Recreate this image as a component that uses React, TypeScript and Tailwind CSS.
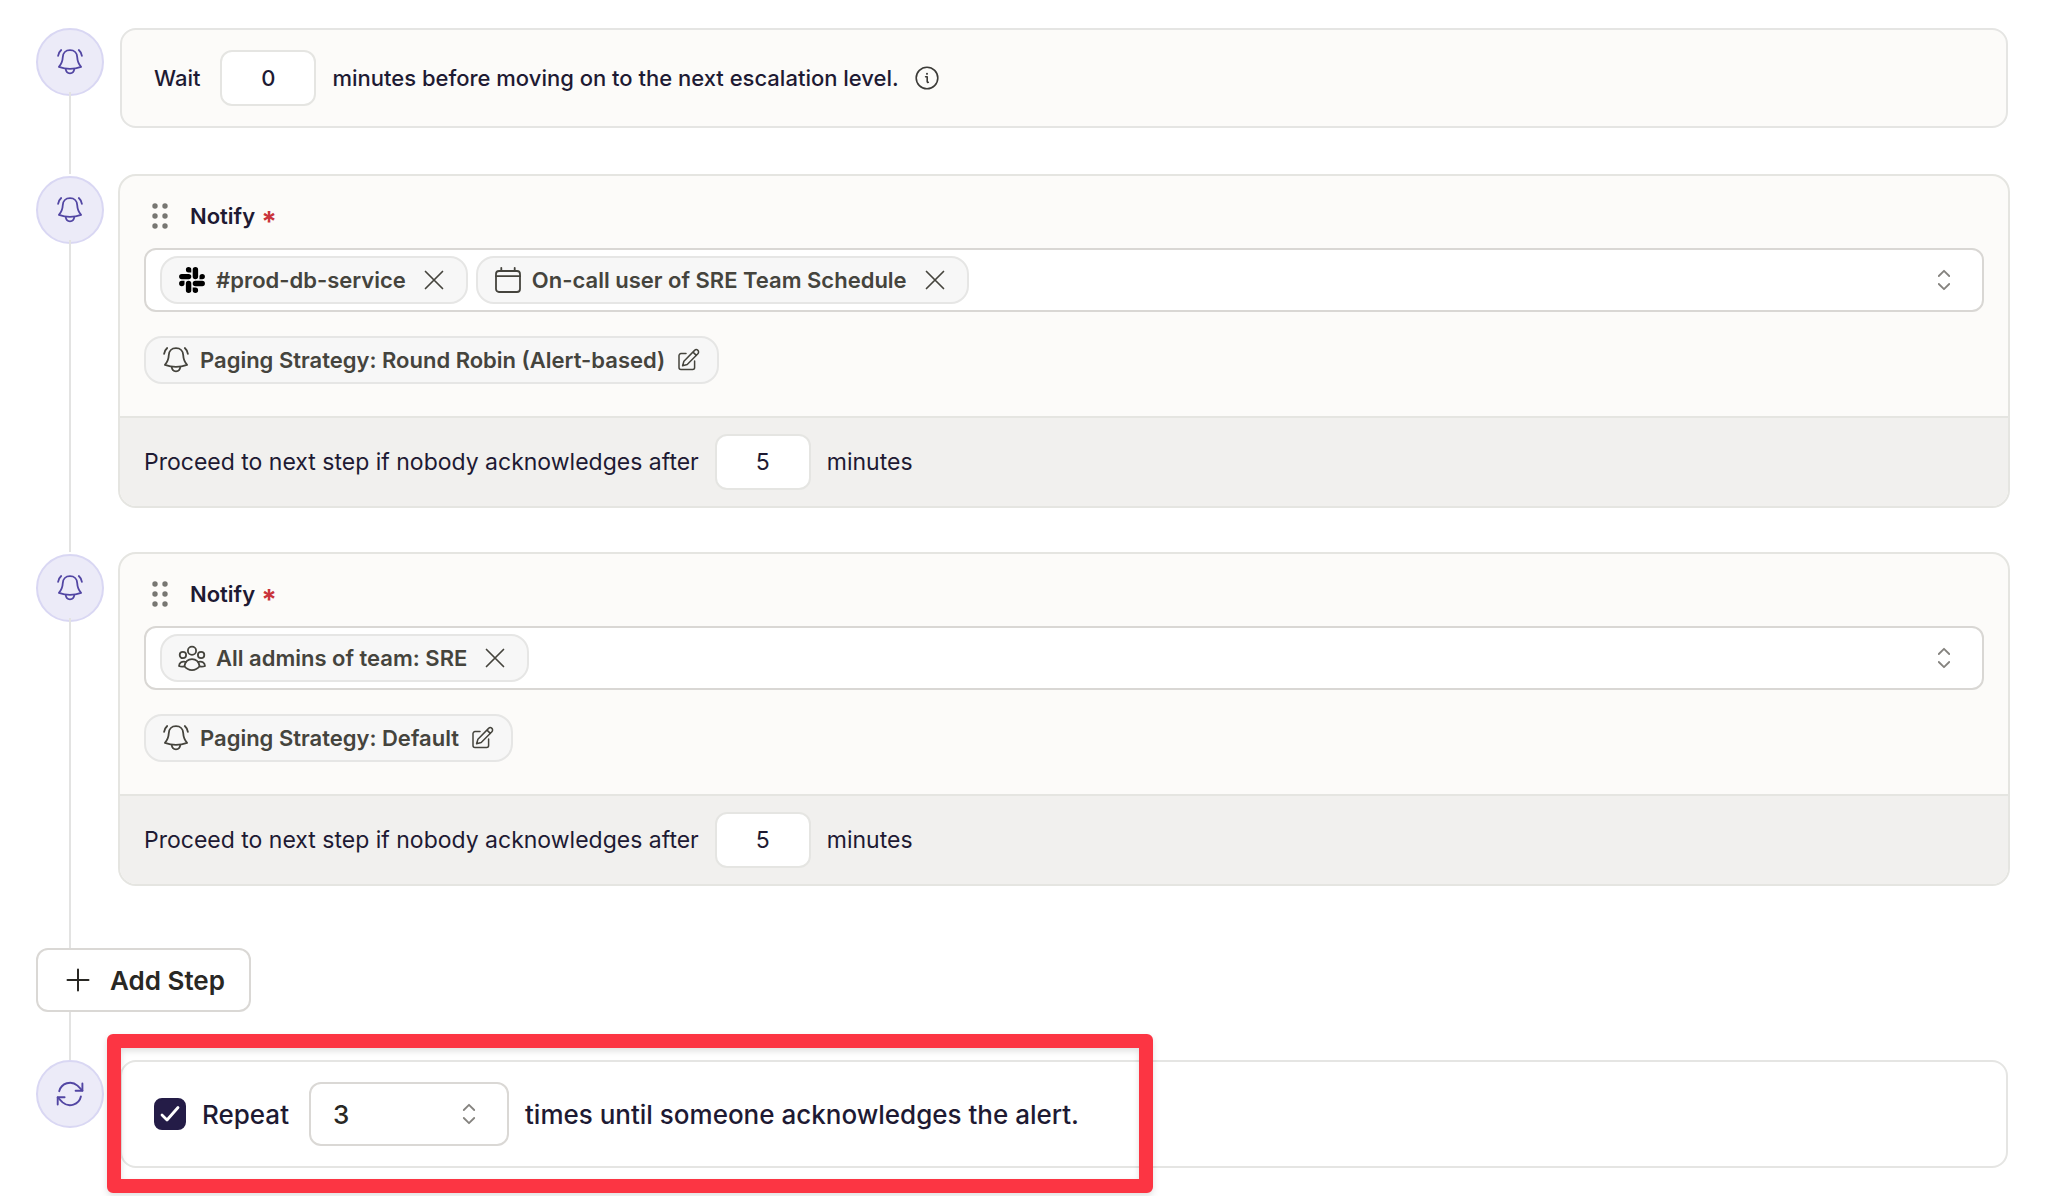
import { ReactNode, useState } from "react";

function Svg({ children, className, viewBox = "0 0 28 28", stroke = 1.8 }: { children: ReactNode; className: string; viewBox?: string; stroke?: number }) {
  return (
    <svg aria-hidden="true" viewBox={viewBox} className={className} fill="none" stroke="currentColor" strokeWidth={stroke} strokeLinecap="round" strokeLinejoin="round">
      {children}
    </svg>
  );
}

const BellIcon = () => (
  <Svg className="size-7 shrink-0">
    <path d="M14 2.2C9.6 2.2 7 5.2 6.8 9C6.6 13 5.8 15.6 2.9 18.9C9.5 21.3 18.5 21.3 25.1 18.9C22.2 15.6 21.4 13 21.2 9C21 5.2 18.4 2.2 14 2.2Z" />
    <path d="M9.7 20.8C9.9 23.6 11.7 25.3 14 25.3S18.1 23.6 18.3 20.8" />
    <path d="M5.2 2C3.4 3.6 2.4 5.4 2.1 7.9M22.8 2C24.6 3.6 25.6 5.4 25.9 7.9" />
  </Svg>
);

const RefreshIcon = () => (
  <Svg className="size-7 shrink-0" stroke={1.9}>
    <path d="M3.2 11.2A11.2 11.2 0 0 1 21.5 5.6L26.4 10.6" />
    <path d="M26.4 3.4V10.7H19.6" />
    <path d="M24.9 16.5A11.2 11.2 0 0 1 6.6 22.4L1.7 17.4" />
    <path d="M1.7 24.6V17.3H8.6" />
  </Svg>
);

const SlackIcon = () => (
  <svg aria-hidden="true" viewBox="-1 -1 26 26" className="size-7 shrink-0 text-black" fill="currentColor">
    <path d="M5.042 15.165a2.528 2.528 0 0 1-2.52 2.523A2.528 2.528 0 0 1 0 15.165a2.527 2.527 0 0 1 2.522-2.52h2.52v2.52zM6.313 15.165a2.527 2.527 0 0 1 2.521-2.52 2.527 2.527 0 0 1 2.521 2.52v6.313A2.528 2.528 0 0 1 8.834 24a2.528 2.528 0 0 1-2.521-2.522v-6.313zM8.834 5.042a2.528 2.528 0 0 1-2.521-2.52A2.528 2.528 0 0 1 8.834 0a2.528 2.528 0 0 1 2.521 2.522v2.52H8.834zM8.834 6.313a2.528 2.528 0 0 1 2.521 2.521 2.528 2.528 0 0 1-2.521 2.521H2.522A2.528 2.528 0 0 1 0 8.834a2.528 2.528 0 0 1 2.522-2.521h6.312zM18.956 8.834a2.528 2.528 0 0 1 2.522-2.521A2.528 2.528 0 0 1 24 8.834a2.528 2.528 0 0 1-2.522 2.521h-2.522V8.834zM17.688 8.834a2.528 2.528 0 0 1-2.523 2.521 2.527 2.527 0 0 1-2.52-2.521V2.522A2.527 2.527 0 0 1 15.165 0a2.528 2.528 0 0 1 2.523 2.522v6.312zM15.165 18.956a2.528 2.528 0 0 1 2.523 2.522A2.528 2.528 0 0 1 15.165 24a2.527 2.527 0 0 1-2.52-2.522v-2.522h2.52zM15.165 17.688a2.527 2.527 0 0 1-2.52-2.523 2.526 2.526 0 0 1 2.52-2.52h6.313A2.527 2.527 0 0 1 24 15.165a2.528 2.528 0 0 1-2.522 2.523h-6.313z" />
  </svg>
);

const CalendarIcon = () => (
  <Svg className="size-7 shrink-0">
    <rect x="2" y="5" width="24" height="21" rx="3" />
    <path d="M2 10.2H26M7.3 1.8V5M20.7 1.8V5" />
  </Svg>
);

const TeamIcon = () => (
  <Svg className="size-7 shrink-0">
    <circle cx="14" cy="6.8" r="4.1" />
    <circle cx="4.9" cy="11" r="3.2" />
    <circle cx="23.1" cy="11" r="3.2" />
    <path d="M6.4 22.3C7.3 17.7 10.2 15.2 14 15.2S20.7 17.7 21.6 22.3C19.5 25 17 26.1 14 26.1S8.5 25 6.4 22.3Z" />
    <path d="M7.6 17.8C4 16.9 1.3 18.3 1 22C2.7 22.8 4.6 22.9 6.4 22.3M20.4 17.8C24 16.9 26.7 18.3 27 22C25.3 22.8 23.4 22.9 21.6 22.3" />
  </Svg>
);

const EditIcon = () => (
  <Svg className="size-6 shrink-0" viewBox="0 0 24 24" stroke={1.5}>
    <path d="M9 5.6H4A2 2 0 0 0 2 7.6V19.4A2 2 0 0 0 4 21.4H15.6A2 2 0 0 0 17.6 19.4V13" />
    <path d="M5.6 17.8L6.9 13.2L17.6 2.4A1.6 1.6 0 0 1 20.9 5.7L10.2 16.5ZM16 4.1L19.3 7.4" />
  </Svg>
);

const CloseIcon = () => (
  <Svg className="size-6" viewBox="0 0 24 24" stroke={1.7}>
    <path d="M3.5 3.5L20.5 20.5M20.5 3.5L3.5 20.5" />
  </Svg>
);

const SortIcon = () => (
  <Svg className="h-6 w-4 text-[#85837f]" viewBox="0 0 16 24">
    <path d="M2.8 8L8 2.8L13.2 8M2.8 16L8 21.2L13.2 16" />
  </Svg>
);

const InfoIcon = () => (
  <Svg className="size-6" viewBox="0 0 24 24" stroke={1.6}>
    <circle cx="12" cy="12" r="10.8" />
    <path d="M10.6 10.8H12.2V15.6Q12.2 16.6 13.3 16.3" />
    <path d="M12 7.6V7.9" strokeWidth={1.9} />
  </Svg>
);

const GripIcon = () => (
  <svg aria-hidden="true" viewBox="0 0 16 28" className="h-7 w-4" fill="currentColor">
    {[4, 14, 24].map((y) => (
      <g key={y}>
        <circle cx="3" cy={y} r="2.7" />
        <circle cx="13" cy={y} r="2.7" />
      </g>
    ))}
  </svg>
);

function Marker({ children }: { children: ReactNode }) {
  return <div className="flex size-[68px] shrink-0 items-center justify-center rounded-full border-2 border-[#d9d7f3] bg-[#ecebf8] text-[#5246a3]">{children}</div>;
}

function Rail({ className = "" }: { className?: string }) {
  return (
    <div className={`flex flex-col items-center ${className}`}>
      <Marker>
        <BellIcon />
      </Marker>
      <div className="z-10 -mt-1 w-0.5 flex-1 bg-[#e3e3e2]" />
    </div>
  );
}

function MinutesInput({ id, value, className }: { id: string; value: string; className: string }) {
  return <input id={id} type="text" inputMode="numeric" defaultValue={value} className={`h-14 w-24 rounded-xl border-2 border-[#e5e5e2] bg-white text-center outline-none ${className}`} />;
}

function Chip({ icon, label }: { icon: ReactNode; label: string }) {
  return (
    <li className="flex h-12 items-center rounded-[18px] border-2 border-[#e6e6e5] bg-[#f7f7f7] px-4 text-[22px] font-semibold text-[#45443d]">
      {icon}
      <span className="ml-2.5">{label}</span>
      <button type="button" aria-label={`Remove ${label}`} className="mr-1 ml-4">
        <CloseIcon />
      </button>
    </li>
  );
}

type StepProps = { id: string; chips: { icon: ReactNode; label: string }[]; strategy: string; last?: boolean };

function NotifyStep({ id, chips, strategy, last }: StepProps) {
  return (
    <li className="flex gap-3.5">
      <Rail className="pt-0.5" />
      <div className={`min-w-0 flex-1 ${last ? "pb-[62px]" : "pb-11"}`}>
        <section className="overflow-hidden rounded-[18px] border-2 border-[#e5e5e1] bg-[#fcfbf9]">
          <div className="px-6 pt-6 pb-8">
            <div className="flex h-8 items-center pl-2">
              <button type="button" aria-label="Reorder step" className="text-[#777672]">
                <GripIcon />
              </button>
              <label htmlFor={`${id}-targets`} className="ml-[22px] flex text-[22px] font-semibold leading-8 text-[#1e1a33]">
                Notify
                <span className="ml-1.5 h-8 text-[28px] font-bold leading-[44px] text-[#c9343b]">*</span>
              </label>
            </div>
            <div className="mt-4 flex min-h-16 items-center rounded-xl border-2 border-[#d9d7d4] bg-white pr-[30px] pl-3.5">
              <ul className="flex flex-wrap gap-2">
                {chips.map((chip) => (
                  <Chip key={chip.label} {...chip} />
                ))}
              </ul>
              <input id={`${id}-targets`} type="text" className="h-12 min-w-0 flex-1 bg-transparent px-2 text-[22px] outline-none" />
              <button type="button" aria-label="Show options">
                <SortIcon />
              </button>
            </div>
            <button type="button" className="mt-6 flex h-12 items-center rounded-[18px] border-2 border-[#e6e6e5] bg-[#f7f7f7] px-4 text-[22px] font-semibold text-[#45443d]">
              <BellIcon />
              <span className="mr-3 ml-2.5">Paging Strategy: {strategy}</span>
              <EditIcon />
            </button>
          </div>
          <div className="flex items-center gap-4 border-t-2 border-[#e5e5e1] bg-[#f1f0ee] px-6 py-4 text-[23px] text-[#1e1a33]">
            <label htmlFor={`${id}-minutes`}>Proceed to next step if nobody acknowledges after</label>
            <MinutesInput id={`${id}-minutes`} value="5" className="" />
            <span>minutes</span>
          </div>
        </section>
      </div>
    </li>
  );
}

export default function App() {
  const [repeat, setRepeat] = useState(true);
  return (
    <main className="bg-white px-9 py-7 font-['Inter',sans-serif] text-[#1e1a33]">
      <ol>
        <li className="flex gap-4 pr-0.5">
          <Rail />
          <div className="min-w-0 flex-1 pb-[46px]">
            <section className="flex items-center rounded-2xl border-2 border-[#e5e5e3] bg-[#fcfbf9] px-8 py-5 text-[22px] font-medium">
              <label htmlFor="wait-minutes" className="mr-5">
                Wait
              </label>
              <MinutesInput id="wait-minutes" value="0" className="mr-4" />
              <span>minutes before moving on to the next escalation level.</span>
              <button type="button" aria-label="More information" className="ml-4 text-[#3c3b38]">
                <InfoIcon />
              </button>
            </section>
          </div>
        </li>
        <NotifyStep
          id="step-1"
          strategy="Round Robin (Alert-based)"
          chips={[
            { icon: <SlackIcon />, label: "#prod-db-service" },
            { icon: <CalendarIcon />, label: "On-call user of SRE Team Schedule" },
          ]}
        />
        <NotifyStep id="step-2" strategy="Default" chips={[{ icon: <TeamIcon />, label: "All admins of team: SRE" }]} last />
      </ol>

      <button type="button" className="flex h-16 items-center rounded-xl border-2 border-[#dad8d5] bg-white pr-6 pl-[26px] text-[26px] font-semibold text-[#292824]">
        <Svg className="mr-[18px] size-7" stroke={2}>
          <path d="M14 3.5V24.5M3.5 14H24.5" />
        </Svg>
        Add Step
      </button>
      <div className="ml-[33px] h-12 w-0.5 bg-[#e3e3e2]" />

      <div className="flex gap-4 pr-0.5">
        <Marker>
          <RefreshIcon />
        </Marker>
        <section className="relative flex min-w-0 flex-1 items-center gap-4 rounded-2xl border-2 border-[#e5e5e3] px-8 py-5 text-[26px] font-medium">
          <label className="flex items-center gap-4 pr-1">
            <span className="grid size-8 place-items-center">
              <input type="checkbox" checked={repeat} onChange={(e) => setRepeat(e.target.checked)} className="col-start-1 row-start-1 size-8 appearance-none rounded-lg border-2 border-[#241c47] checked:bg-[#241c47]" />
              {repeat && (
                <Svg className="pointer-events-none col-start-1 row-start-1 size-6 text-white" viewBox="0 0 24 24" stroke={2.8}>
                  <path d="M4 13L9 18L20 5.5" />
                </Svg>
              )}
            </span>
            Repeat
          </label>
          <div className="grid w-[200px] items-center">
            <select aria-label="Repeat count" defaultValue="3" className="col-start-1 row-start-1 h-16 appearance-none rounded-xl border-2 border-[#dad8d5] bg-white px-[22px] text-[#292824] outline-none">
              <option>1</option>
              <option>2</option>
              <option>3</option>
              <option>4</option>
              <option>5</option>
            </select>
            <span className="pointer-events-none col-start-1 row-start-1 mr-8 justify-self-end">
              <SortIcon />
            </span>
          </div>
          <span>times until someone acknowledges the alert.</span>
          <div className="pointer-events-none absolute -top-7 -left-[15px] h-[159px] w-[1046px] rounded-md border-[14px] border-[#fc3543] drop-shadow-md" />
        </section>
      </div>
    </main>
  );
}
